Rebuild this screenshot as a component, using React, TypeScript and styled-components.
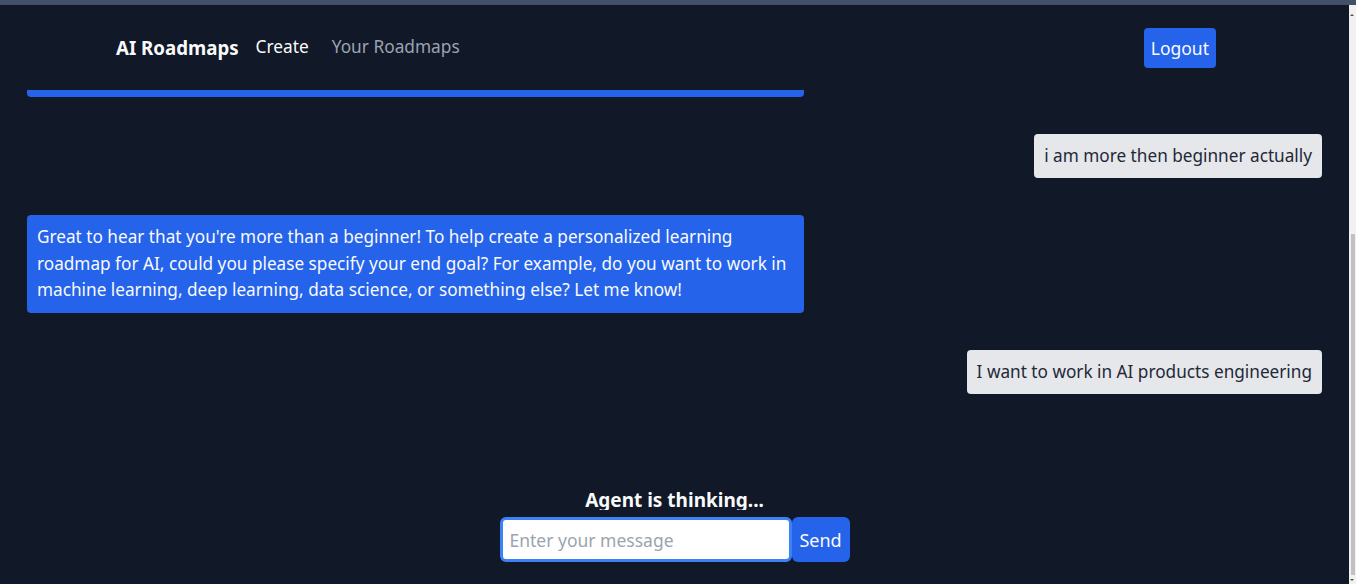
import React, { useLayoutEffect, useRef } from "react";
import styled, { createGlobalStyle } from "styled-components";

const GlobalStyle = createGlobalStyle`
  html, body { margin: 0; padding: 0; height: 100%; background: #111827; overflow: hidden; }
  body { font-family: "Noto Sans", "Open Sans", sans-serif; }
  * { box-sizing: border-box; }
`;

const Page = styled.div`
  display: flex;
  flex-direction: column;
  height: 584px;
  background: #111827;
`;

const TopStrip = styled.div`
  height: 5px;
  flex: none;
  background: #425169;
`;

const Body = styled.div`
  flex: 1;
  min-height: 0;
  display: flex;
`;

const Scroller = styled.div`
  flex: 1;
  min-width: 0;
  overflow-y: scroll;
  background: #111827;
  scrollbar-width: none;
  &::-webkit-scrollbar { display: none; }
`;

const ScrollTrack = styled.div`
  width: 7px;
  flex: none;
  background: #f1f1f1;
  display: flex;
  flex-direction: column;
  align-items: flex-start;
  padding: 9px 0 3px 1px;
`;

const Arrow = styled.div<{ $down?: boolean }>`
  width: 0;
  height: 0;
  border-left: 2px solid transparent;
  border-right: 2px solid transparent;
  ${(p) =>
    p.$down
      ? "border-top: 2px solid #505050;"
      : "border-bottom: 2px solid #505050;"}
`;

const Thumb = styled.div`
  width: 4px;
  margin: 218px 0 0 1px;
  height: 341px;
  background: #c1c1c1;
`;

const TrackFill = styled.div`
  flex: 1;
`;

const Nav = styled.nav`
  position: sticky;
  top: 0;
  z-index: 2;
  height: 85px;
  background: #111827;
  display: flex;
  align-items: center;
  padding: 0 133px 0 116px;
`;

const Brand = styled.span`
  font-size: 18.7px;
  font-weight: 700;
  color: #f9fafb;
  margin-right: 17px;
`;

const NavLink = styled.a<{ $active?: boolean }>`
  font-size: 17.3px;
  color: ${(p) => (p.$active ? "#f9fafb" : "#9ca3af")};
  text-decoration: none;
  margin-right: 23px;
  margin-top: -2px;
`;

const Spacer = styled.div`
  flex: 1;
`;

const LogoutButton = styled.button`
  height: 40px;
  padding: 0 7px;
  border: none;
  border-radius: 4px;
  background: #2563eb;
  color: #f9fafb;
  font-family: inherit;
  font-size: 17.5px;
  margin-top: 1px;
`;

const MessageList = styled.div`
  display: flex;
  flex-direction: column;
  gap: 37px;
  padding: 40px 27px 92px;
`;

const Bubble = styled.div<{ $user?: boolean }>`
  align-self: ${(p) => (p.$user ? "flex-end" : "flex-start")};
  max-width: 60%;
  padding: 9px 10px;
  border-radius: 4px;
  font-size: 17.2px;
  line-height: 26.5px;
  background: ${(p) => (p.$user ? "#e5e7eb" : "#2563eb")};
  color: ${(p) => (p.$user ? "#1f2937" : "#f9fafb")};
`;

const Footer = styled.div`
  display: flex;
  flex-direction: column;
  align-items: center;
  padding-bottom: 22px;
`;

const ThinkingLabel = styled.div`
  height: 24px;
  overflow: hidden;
  font-size: 19px;
  font-weight: 700;
  line-height: 29px;
  color: #f9fafb;
  margin-bottom: 7px;
`;

const InputRow = styled.form`
  display: flex;
  height: 45px;
`;

const MessageInput = styled.input`
  width: 292px;
  height: 45px;
  border: 3px solid #3b82f6;
  border-radius: 6px;
  padding: 0 7px;
  font-family: inherit;
  font-size: 17.5px;
  color: #111827;
  background: #fff;
  outline: none;
  &::placeholder { color: #9ca3af; }
`;

const SendButton = styled.button`
  width: 58px;
  height: 45px;
  border: none;
  border-radius: 6px;
  background: #2563eb;
  color: #f9fafb;
  font-family: inherit;
  font-size: 18px;
`;

const messages: { user: boolean; text: string }[] = [
  { user: false, text: "Hello! I'm here to help you build a personalized AI learning roadmap. To get started, could you tell me a bit about your current experience with AI?" },
  { user: true, text: "hi, I want to learn AI" },
  { user: false, text: "That's great! AI is a wide field with many exciting directions. How would you describe your current level: beginner, intermediate, or advanced?" },
  { user: true, text: "i am more then beginner actually" },
  { user: false, text: "Great to hear that you're more than a beginner! To help create a personalized learning roadmap for AI, could you please specify your end goal? For example, do you want to work in machine learning, deep learning, data science, or something else? Let me know!" },
  { user: true, text: "I want to work in AI products engineering" },
];

export default function App() {
  const ref = useRef<HTMLDivElement>(null);
  useLayoutEffect(() => {
    const el = ref.current;
    if (el) el.scrollTop = el.scrollHeight;
  }, []);
  return (
    <>
      <GlobalStyle />
      <Page>
        <TopStrip />
        <Body>
          <Scroller ref={ref}>
            <Nav>
              <Brand>AI Roadmaps</Brand>
              <NavLink $active href="#">Create</NavLink>
              <NavLink href="#">Your Roadmaps</NavLink>
              <Spacer />
              <LogoutButton>Logout</LogoutButton>
            </Nav>
            <MessageList>
              {messages.map((m, i) => (
                <Bubble key={i} $user={m.user}>{m.text}</Bubble>
              ))}
            </MessageList>
            <Footer>
              <ThinkingLabel>Agent is thinking...</ThinkingLabel>
              <InputRow onSubmit={(e) => e.preventDefault()}>
                <MessageInput placeholder="Enter your message" autoFocus />
                <SendButton type="submit">Send</SendButton>
              </InputRow>
            </Footer>
          </Scroller>
          <ScrollTrack>
            <Arrow />
            <Thumb />
            <TrackFill />
            <Arrow $down />
          </ScrollTrack>
        </Body>
      </Page>
    </>
  );
}
